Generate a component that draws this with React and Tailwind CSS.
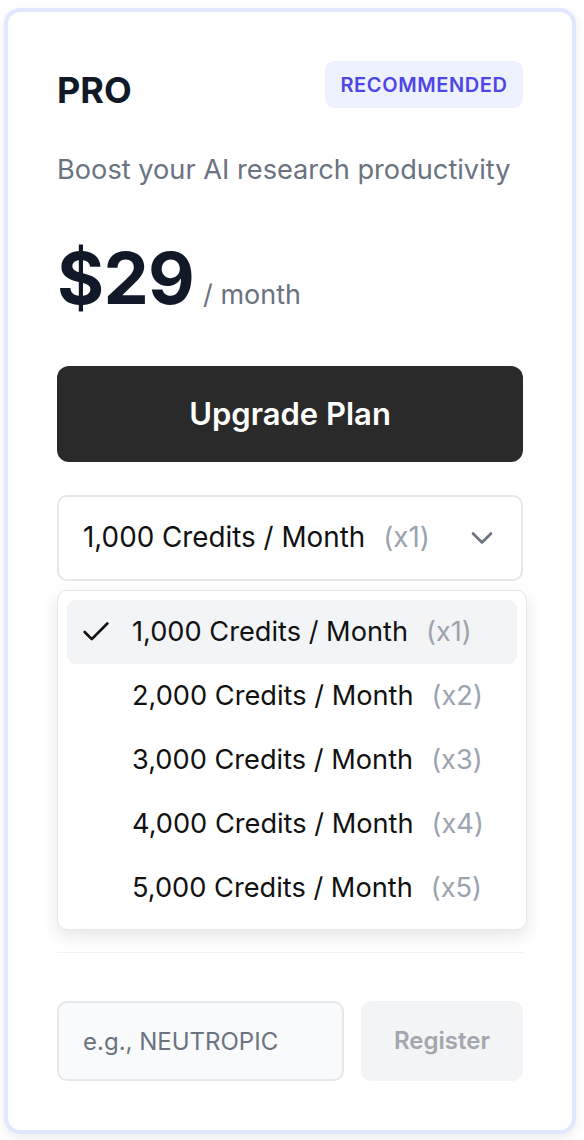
import React from "react";
import { Check, ChevronDown } from "lucide-react";

const options = [
  { credits: "1,000", mult: "x1" },
  { credits: "2,000", mult: "x2" },
  { credits: "3,000", mult: "x3" },
  { credits: "4,000", mult: "x4" },
  { credits: "5,000", mult: "x5" },
];

const App = () => {
  const selected = 0;

  return (
    <div className="min-h-screen bg-white pl-[4px] pt-[8px] font-['Inter',sans-serif]">
      {/* Plan card */}
      <div className="w-[572px] rounded-[16px] border-4 border-[#e0e7ff] bg-white px-[49px] pt-[49px] pb-[49px] shadow-[0_4px_10px_rgba(0,0,0,0.08)]">
        {/* Header */}
        <div className="flex items-start justify-between">
          <h2 className="mt-[9px] text-[36px] leading-[40px] font-bold text-[#111827]">PRO</h2>
          <span className="flex h-[47px] w-[198px] items-center justify-center rounded-[9px] bg-[#eef2ff] text-[20px] font-semibold tracking-[0.03em] text-[#4f46e5]">
            RECOMMENDED
          </span>
        </div>

        <p className="mt-[39px] text-[27.2px] leading-[42px] text-[#6b7280]">
          Boost your AI research productivity
        </p>

        {/* Price */}
        <div className="mt-[51px] flex items-baseline">
          <span className="text-[72px] leading-[72px] font-bold tracking-[-0.01em] text-[#111827]">$29</span>
          <span className="ml-[9px] text-[27px] leading-[40px] text-[#6b7280]">/ month</span>
        </div>

        <button className="mt-[51px] flex h-[96px] w-full items-center justify-center rounded-[12px] bg-[#2a2a2a] text-[31px] font-semibold text-white">
          Upgrade Plan
        </button>

        {/* Credits select */}
        <div className="mt-[33px] flex h-[86px] w-full items-center justify-between rounded-[10px] border-2 border-[#e5e7eb] bg-white pl-[24px] pr-[21px]">
          <span className="text-[27.8px] text-[#111111]">
            {options[selected].credits} Credits / Month
            <span className="ml-[18px] text-[#9ca3af]">({options[selected].mult})</span>
          </span>
          <ChevronDown size={36} strokeWidth={1.75} className="text-[#6b7280]" />
        </div>

        {/* Open menu */}
        <div className="mt-[9px] w-[470px] rounded-[10px] border border-[#e5e7eb] bg-white p-[9px] shadow-[0_6px_16px_rgba(0,0,0,0.10)]">
          {options.map((opt, i) => (
            <div
              key={opt.mult}
              className={
                i === selected
                  ? "flex h-[64px] items-center rounded-[9px] bg-[#f3f4f6] pl-[12px]"
                  : "flex h-[64px] items-center rounded-[9px] pl-[12px]"
              }
            >
              <span className="flex w-[34px] justify-center">
                {i === selected && <Check size={34} strokeWidth={1.9} className="text-[#111111]" />}
              </span>
              <span className="ml-[19px] text-[27.2px] text-[#111111]">
                {opt.credits} Credits / Month
                <span className="ml-[18px] text-[#9ca3af]">({opt.mult})</span>
              </span>
            </div>
          ))}
        </div>

        <div className="mt-[22px] h-px w-full bg-[#f1f2f4]" />

        {/* Promo code */}
        <div className="mt-[48px] flex gap-[17px]">
          <input
            type="text"
            placeholder="e.g., NEUTROPIC"
            className="h-[80px] w-[287px] rounded-[10px] border-2 border-[#e5e7eb] bg-[#f9fafb] px-[24px] text-[24px] text-[#111827] placeholder:text-[#6b7280] outline-none"
          />
          <button className="h-[80px] flex-1 rounded-[10px] bg-[#f3f4f6] text-[24px] font-semibold text-[#a3a6ad]">
            Register
          </button>
        </div>
      </div>
    </div>
  );
};

export default App;
